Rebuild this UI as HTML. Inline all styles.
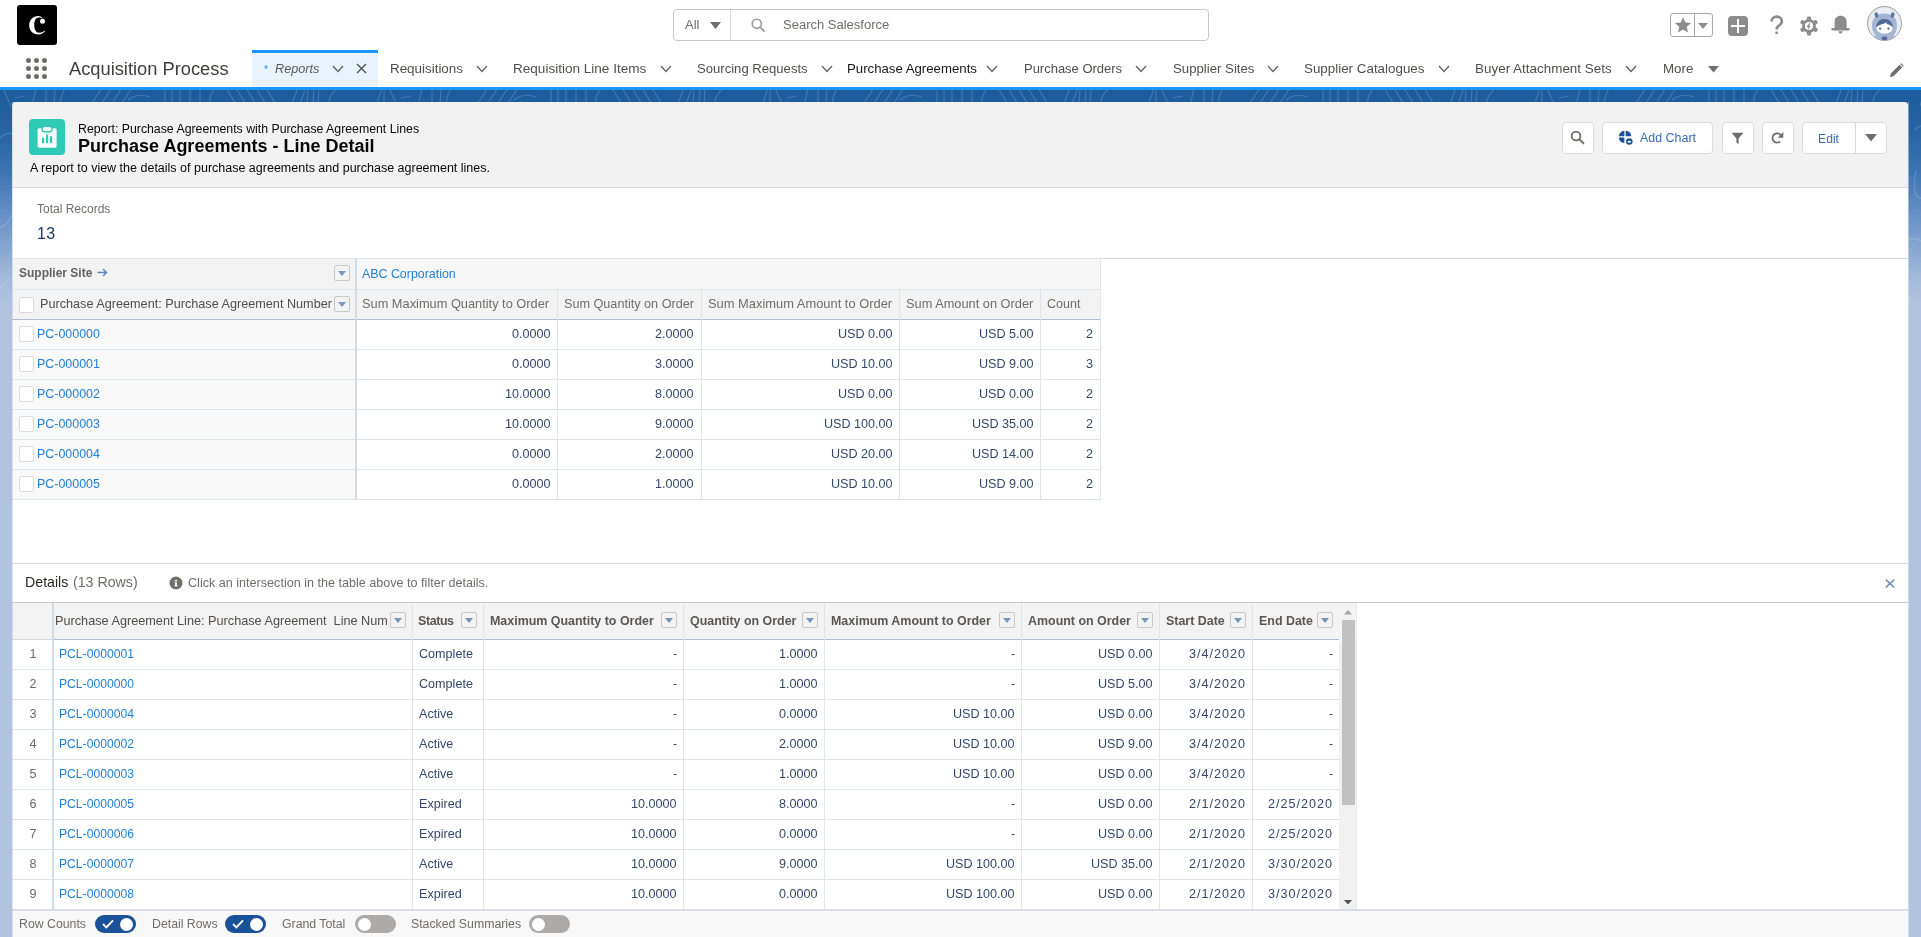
<!DOCTYPE html>
<html><head><meta charset="utf-8"><title>Report</title>
<style>
html,body{margin:0;padding:0;width:1921px;height:937px;overflow:hidden;background:#b0c4df;font-family:"Liberation Sans",sans-serif;}
.t{position:absolute;white-space:pre;will-change:transform;}
.r{position:absolute;}
</style></head><body>
<div class="r" style="left:0px;top:0px;width:1921px;height:87px;background:#fff"></div>
<div class="r" style="left:17px;top:5px;width:40px;height:40px;background:#000;border-radius:3px"></div>
<svg class="r" style="left:17px;top:5px" width="40" height="40" viewBox="0 0 40 40"><path d="M25.8 13.4 C24.6 11.6 23.0 10.9 21.3 10.9 C16.0 10.9 12.2 15.0 12.2 20.3 C12.2 25.7 16.0 29.6 21.3 29.6 C24.2 29.6 26.4 28.2 28.2 26.3 L27.7 25.8 C26.2 27.0 24.4 27.7 22.2 27.7 C19.0 27.7 17.2 24.5 17.2 20.0 C17.2 15.5 19.0 12.4 21.8 12.4 C23.4 12.4 24.8 12.9 25.8 13.8 Z" fill="#fff"/><circle cx="25.5" cy="16.3" r="2.5" fill="#fff"/></svg>
<div class="r" style="left:673px;top:9px;width:536px;height:32px;background:#fff;border:1px solid #c9c9c9;border-radius:4px;box-sizing:border-box"></div>
<div class="r" style="left:730px;top:10px;width:1px;height:30px;background:#dddbda"></div>
<div class="t" style="left:685px;top:18.00px;font-size:13px;line-height:13px;color:#706e6b;">All</div>
<svg class="r" style="left:710px;top:22px" width="11" height="7" viewBox="0 0 11 7"><path d="M0 0 H11 L5.5 7 Z" fill="#706e6b"/></svg>
<svg class="r" style="left:751px;top:18px" width="14" height="14" viewBox="0 0 14 14"><circle cx="5.8" cy="5.8" r="4.6" fill="none" stroke="#9a9a9a" stroke-width="1.6"/><path d="M9.2 9.2 L13 13" stroke="#9a9a9a" stroke-width="1.8" stroke-linecap="round"/></svg>
<div class="t" style="left:783px;top:18.00px;font-size:13px;line-height:13px;color:#706e6b;">Search Salesforce</div>
<div class="r" style="left:1670px;top:13px;width:43px;height:24px;border:1px solid #a8a8a8;border-radius:3px;box-sizing:border-box;background:#fff"></div>
<div class="r" style="left:1694px;top:14px;width:1px;height:22px;background:#a8a8a8"></div>
<svg class="r" style="left:1674px;top:16px" width="18" height="18" viewBox="0 0 24 24"><path d="M12 1.5 L15.1 8.6 L22.8 9.3 L17 14.4 L18.7 22 L12 18 L5.3 22 L7 14.4 L1.2 9.3 L8.9 8.6 Z" fill="#8c8c8c"/></svg>
<svg class="r" style="left:1698px;top:23px" width="10" height="6" viewBox="0 0 10 6"><path d="M0 0 H10 L5 6 Z" fill="#8c8c8c"/></svg>
<div class="r" style="left:1728px;top:16px;width:20px;height:20px;background:#8c8c8c;border-radius:4px"></div>
<div class="r" style="left:1737px;top:19px;width:2.4px;height:14px;background:#fff"></div>
<div class="r" style="left:1731px;top:24.8px;width:14px;height:2.4px;background:#fff"></div>
<svg class="r" style="left:1768px;top:15px" width="16" height="20" viewBox="0 0 16 20"><path d="M3.5 6.6 C3.5 3.3 5.9 1.6 8.7 1.6 C11.7 1.6 13.9 3.6 13.9 6.2 C13.9 8.6 12.2 9.8 10.7 10.9 C9.5 11.8 8.7 12.6 8.7 14.1 V14.4" fill="none" stroke="#8c8c8c" stroke-width="2.6"/><rect x="7.4" y="16.6" width="2.6" height="2.3" rx="0.4" fill="#8c8c8c"/></svg>
<svg class="r" style="left:1798.5px;top:15.8px" width="20" height="20" viewBox="0 0 20 20"><g fill="#8c8c8c"><circle cx="10" cy="10" r="6.9"/><rect x="8" y="0.6" width="4" height="4.2" rx="1" transform="rotate(0 10 10)"/><rect x="8" y="0.6" width="4" height="4.2" rx="1" transform="rotate(60 10 10)"/><rect x="8" y="0.6" width="4" height="4.2" rx="1" transform="rotate(120 10 10)"/><rect x="8" y="0.6" width="4" height="4.2" rx="1" transform="rotate(180 10 10)"/><rect x="8" y="0.6" width="4" height="4.2" rx="1" transform="rotate(240 10 10)"/><rect x="8" y="0.6" width="4" height="4.2" rx="1" transform="rotate(300 10 10)"/></g><circle cx="10" cy="10" r="4.1" fill="#fff"/><path d="M11 7.2 L8.6 10.4 H10.6 L9.2 12.9" stroke="#8c8c8c" stroke-width="1.1" fill="none"/></svg>
<svg class="r" style="left:1830px;top:15px" width="21" height="20" viewBox="0 0 21 20"><path d="M4.6 7 C4.6 3 7 0.8 10.6 0.8 C14.2 0.8 16.6 3 16.6 7 V13 H18.4 C19.2 13 19.6 13.6 19.6 14.2 C19.6 14.9 19.2 15.4 18.4 15.4 H2.6 C1.8 15.4 1.4 14.9 1.4 14.2 C1.4 13.6 1.8 13 2.6 13 H4.6 Z" fill="#8c8c8c"/><path d="M8.3 16.3 H12.9 C12.5 17.8 11.7 18.6 10.6 18.6 C9.5 18.6 8.7 17.8 8.3 16.3 Z" fill="#8c8c8c"/></svg>
<svg class="r" style="left:1866px;top:5.2px" width="37" height="37" viewBox="0 0 37 37"><defs><clipPath id="avc"><circle cx="18.5" cy="18.5" r="16.6"/></clipPath></defs><circle cx="18.5" cy="18.5" r="17" fill="#e8ecf3" stroke="#a0a0a0" stroke-width="1"/><g clip-path="url(#avc)"><path d="M6 20 C6 12.5 11 8.4 18.5 8.4 C26 8.4 31 12.5 31 20 C31 25 29.5 28.5 27.5 30.5 C30 32 32 34 33 37 H4 C5 34 7 32 9.5 30.5 C7.5 28.5 6 25 6 20 Z" fill="#a3b5d3"/><ellipse cx="18.5" cy="33.4" rx="2.9" ry="2" fill="#4f6a98"/></g><ellipse cx="10.4" cy="10" rx="1.8" ry="2.7" transform="rotate(-18 10.4 10)" fill="#5a74a0"/><ellipse cx="26.6" cy="10" rx="1.8" ry="2.7" transform="rotate(18 26.6 10)" fill="#5a74a0"/><ellipse cx="18.5" cy="23" rx="8.1" ry="5.8" fill="#fff"/><path d="M10.2 22.6 C10.2 17 13.8 14 18.5 14 C23.2 14 26.8 17 26.8 22.6 C25 20.2 22.6 19.3 20.2 19 L21.4 16.8 L17.8 18.8 C15 19.2 12.2 20.4 10.2 22.6 Z" fill="#4f6a98"/><circle cx="14.1" cy="23.6" r="1.2" fill="#5a74a0"/><circle cx="22.5" cy="23.6" r="1.2" fill="#5a74a0"/></svg>
<div class="r" style="left:25.6px;top:58.2px;width:5px;height:5px;background:#706e6b;border-radius:50%"></div>
<div class="r" style="left:25.6px;top:66.3px;width:5px;height:5px;background:#706e6b;border-radius:50%"></div>
<div class="r" style="left:25.6px;top:74.4px;width:5px;height:5px;background:#706e6b;border-radius:50%"></div>
<div class="r" style="left:33.7px;top:58.2px;width:5px;height:5px;background:#706e6b;border-radius:50%"></div>
<div class="r" style="left:33.7px;top:66.3px;width:5px;height:5px;background:#706e6b;border-radius:50%"></div>
<div class="r" style="left:33.7px;top:74.4px;width:5px;height:5px;background:#706e6b;border-radius:50%"></div>
<div class="r" style="left:41.8px;top:58.2px;width:5px;height:5px;background:#706e6b;border-radius:50%"></div>
<div class="r" style="left:41.8px;top:66.3px;width:5px;height:5px;background:#706e6b;border-radius:50%"></div>
<div class="r" style="left:41.8px;top:74.4px;width:5px;height:5px;background:#706e6b;border-radius:50%"></div>
<div class="t" style="left:68.5px;top:59.51px;font-size:18.3px;line-height:18.3px;color:#3e3e3c;">Acquisition Process</div>
<div class="r" style="left:252px;top:50px;width:126px;height:37px;background:#e8f3fd"></div>
<div class="r" style="left:252px;top:50px;width:126px;height:3px;background:#1b96ff"></div>
<div class="t" style="left:264px;top:64.53px;font-size:10px;line-height:10px;color:#1b96ff;">*</div>
<div class="t" style="left:275px;top:63.25px;font-size:12.7px;line-height:12.7px;color:#5c5a58;font-style:italic;">Reports</div>
<svg class="r" style="left:332px;top:65px" width="12" height="8" viewBox="0 0 12 8"><path d="M1 1 L6 6.5 L11 1" fill="none" stroke="#615f5d" stroke-width="1.25"/></svg>
<svg class="r" style="left:356px;top:63px" width="11" height="11" viewBox="0 0 11 11"><path d="M1 1 L10 10 M10 1 L1 10" stroke="#514f4d" stroke-width="1.4"/></svg>
<div class="t" style="left:390px;top:61.66px;font-size:13.4px;line-height:13.4px;color:#514f4d;">Requisitions</div>
<svg class="r" style="left:476px;top:65px" width="12" height="8" viewBox="0 0 12 8"><path d="M1 1 L6 6.5 L11 1" fill="none" stroke="#615f5d" stroke-width="1.25"/></svg>
<div class="t" style="left:513px;top:61.52px;font-size:13.56px;line-height:13.56px;color:#514f4d;">Requisition Line Items</div>
<svg class="r" style="left:660px;top:65px" width="12" height="8" viewBox="0 0 12 8"><path d="M1 1 L6 6.5 L11 1" fill="none" stroke="#615f5d" stroke-width="1.25"/></svg>
<div class="t" style="left:697px;top:61.91px;font-size:13.1px;line-height:13.1px;color:#514f4d;">Sourcing Requests</div>
<svg class="r" style="left:821px;top:65px" width="12" height="8" viewBox="0 0 12 8"><path d="M1 1 L6 6.5 L11 1" fill="none" stroke="#615f5d" stroke-width="1.25"/></svg>
<div class="t" style="left:847px;top:61.82px;font-size:13.21px;line-height:13.21px;color:#181818;">Purchase Agreements</div>
<svg class="r" style="left:986px;top:65px" width="12" height="8" viewBox="0 0 12 8"><path d="M1 1 L6 6.5 L11 1" fill="none" stroke="#615f5d" stroke-width="1.25"/></svg>
<div class="t" style="left:1024px;top:63.02px;font-size:12.97px;line-height:12.97px;color:#514f4d;">Purchase Orders</div>
<svg class="r" style="left:1135px;top:65px" width="12" height="8" viewBox="0 0 12 8"><path d="M1 1 L6 6.5 L11 1" fill="none" stroke="#615f5d" stroke-width="1.25"/></svg>
<div class="t" style="left:1173px;top:61.82px;font-size:13.21px;line-height:13.21px;color:#514f4d;">Supplier Sites</div>
<svg class="r" style="left:1267px;top:65px" width="12" height="8" viewBox="0 0 12 8"><path d="M1 1 L6 6.5 L11 1" fill="none" stroke="#615f5d" stroke-width="1.25"/></svg>
<div class="t" style="left:1304px;top:61.67px;font-size:13.38px;line-height:13.38px;color:#514f4d;">Supplier Catalogues</div>
<svg class="r" style="left:1438px;top:65px" width="12" height="8" viewBox="0 0 12 8"><path d="M1 1 L6 6.5 L11 1" fill="none" stroke="#615f5d" stroke-width="1.25"/></svg>
<div class="t" style="left:1475px;top:61.61px;font-size:13.45px;line-height:13.45px;color:#514f4d;">Buyer Attachment Sets</div>
<svg class="r" style="left:1625px;top:65px" width="12" height="8" viewBox="0 0 12 8"><path d="M1 1 L6 6.5 L11 1" fill="none" stroke="#615f5d" stroke-width="1.25"/></svg>
<div class="t" style="left:1663px;top:61.74px;font-size:13.3px;line-height:13.3px;color:#514f4d;">More</div>
<svg class="r" style="left:1708px;top:66px" width="11" height="6.5" viewBox="0 0 11 6.5"><path d="M0 0 H11 L5.5 6.5 Z" fill="#6f6d6b"/></svg>
<svg class="r" style="left:1889px;top:62.5px" width="15" height="15" viewBox="0 0 15 15"><path d="M1 14 L1.8 10.6 L10.6 1.8 L13.2 4.4 L4.4 13.2 Z" fill="#706e6b"/><path d="M11.3 1.1 L12.2 0.2 L14.8 2.8 L13.9 3.7 Z" fill="#706e6b"/></svg>
<div class="r" style="left:0px;top:87px;width:1921px;height:3px;background:#1b96ff"></div>
<div class="r" style="left:0px;top:90px;width:1921px;height:847px;background:linear-gradient(to bottom,#1d5c9c 0px,#2563a3 40px,#3c72b2 80px,#6c94c7 130px,#a0b8da 185px,#b0c4df 212px)"></div>
<svg class="r" style="left:0;top:90px" width="1921" height="230"><defs><pattern id="pt" x="0" y="0" width="386" height="230" patternUnits="userSpaceOnUse"><path d="M226 -2 L237 16 M236 -2 L247 16 M246 -2 L257 16 M256 -2 L267 16 M266 -2 L277 16 M298 -2 L291 16 M306 -2 L299 16 M308 -2 L307 16 M314 -2 L313 16 M319 -2 L318 16 M338 -2 C330 4 328 10 329 16 M382 -2 L376 16 M384 -2 L384 16 M3 -2 L11 16 M15 8 L25 6 M36 -2 L32 16 M46 -2 L46 16 M55 -2 L54 16 M66 -2 C61 4 60 10 61 16 M102 -2 L90 16 M112 -2 L100 16 M122 -2 L110 16 M132 -2 L120 16 M128 10 C134 5 142 4 150 7 M165 -2 L165 16 M172 -2 L172 16 M180 -2 L180 16 M190 -2 L190 16 M200 -2 L200 16 M216 -2 C210 4 209 10 210 16 M-10 60 C10 30 25 40 20 90 C15 140 -5 150 -10 120 M0 200 C20 170 30 190 10 230 M370 40 C395 20 400 60 390 90 C380 120 365 110 372 80 M360 150 C390 140 400 190 380 210" fill="none" stroke="#ffffff" stroke-opacity="0.16" stroke-width="1.1"/></pattern></defs><rect width="1921" height="230" fill="url(#pt)"/></svg>
<div class="r" style="left:12px;top:102px;width:1896px;height:835px;background:#fff;border-radius:4px 4px 0 0"></div>
<div class="r" style="left:12px;top:102px;width:1896px;height:85px;background:#f2f2f2;border-radius:4px 4px 0 0"></div>
<div class="r" style="left:12px;top:187px;width:1896px;height:1px;background:#dddbda"></div>
<div class="r" style="left:29px;top:119px;width:36px;height:36px;background:#2fcab7;border-radius:4px"></div>
<svg class="r" style="left:29px;top:119px" width="36" height="36" viewBox="0 0 36 36"><rect x="8.6" y="9.2" width="19" height="19.5" rx="1.6" fill="#fff"/><rect x="13" y="7.2" width="10" height="5.6" rx="2.6" fill="#fff" stroke="#2fcab7" stroke-width="1.4"/><rect x="13" y="18.6" width="2.2" height="5.6" fill="#2fcab7"/><rect x="17" y="15.6" width="2.2" height="8.6" fill="#2fcab7"/><rect x="21" y="17.2" width="2.2" height="7" fill="#2fcab7"/></svg>
<div class="t" style="left:78px;top:122.59px;font-size:12.3px;line-height:12.3px;color:#080707;">Report: Purchase Agreements with Purchase Agreement Lines</div>
<div class="t" style="left:78px;top:136.76px;font-size:18px;line-height:18px;color:#080707;font-weight:700;">Purchase Agreements - Line Detail</div>
<div class="t" style="left:30px;top:162.42px;font-size:12.5px;line-height:12.5px;color:#080707;">A report to view the details of purchase agreements and purchase agreement lines.</div>
<div class="r" style="left:1562px;top:122px;width:32px;height:32px;background:#fff;border:1px solid #dddbda;border-radius:4px;box-sizing:border-box"></div>
<div class="r" style="left:1602px;top:122px;width:111px;height:32px;background:#fff;border:1px solid #dddbda;border-radius:4px;box-sizing:border-box"></div>
<div class="r" style="left:1722px;top:122px;width:32px;height:32px;background:#fff;border:1px solid #dddbda;border-radius:4px;box-sizing:border-box"></div>
<div class="r" style="left:1762px;top:122px;width:32px;height:32px;background:#fff;border:1px solid #dddbda;border-radius:4px;box-sizing:border-box"></div>
<div class="r" style="left:1802px;top:122px;width:85px;height:32px;background:#fff;border:1px solid #dddbda;border-radius:4px;box-sizing:border-box"></div>
<div class="r" style="left:1855px;top:123px;width:1px;height:30px;background:#dddbda"></div>
<svg class="r" style="left:1570px;top:130px" width="15" height="15" viewBox="0 0 15 15"><circle cx="6" cy="6" r="4.4" fill="none" stroke="#706e6b" stroke-width="1.8"/><path d="M9.3 9.3 L13.4 13.4" stroke="#706e6b" stroke-width="2" stroke-linecap="round"/></svg>
<svg class="r" style="left:1618px;top:130px" width="16" height="16" viewBox="0 0 16 16"><g fill="#1b4f9a"><path d="M6.4 6.2 V0.65 A6.3 6.3 0 0 0 0.85 6.2 Z"/><path d="M7.6 0.65 A6.3 6.3 0 0 1 13.35 6.2 L7.6 6.2 Z"/><path d="M6.4 7.5 H0.85 A6.3 6.3 0 0 0 6.4 13.1 Z"/></g><circle cx="11.3" cy="11.6" r="3.9" fill="#1b4f9a" stroke="#fff" stroke-width="1.3"/><ellipse cx="11.3" cy="11.7" rx="1.9" ry="1" fill="#fff"/></svg>
<div class="t" style="left:1640px;top:132.46px;font-size:12.45px;line-height:12.45px;color:#3a6bb5;">Add Chart</div>
<svg class="r" style="left:1731px;top:132px" width="13" height="13" viewBox="0 0 13 13"><path d="M0.5 0.8 H12.5 L7.6 6.6 V12.3 L5.4 10.6 V6.6 Z" fill="#706e6b"/></svg>
<svg class="r" style="left:1770px;top:130px" width="15" height="15" viewBox="0 0 15 15"><path d="M10.9 5.4 A4.6 4.6 0 1 0 10.1 11.5" fill="none" stroke="#706e6b" stroke-width="1.8"/><path d="M13.3 1.9 V7.8 H7.7 Z" fill="#706e6b"/></svg>
<div class="t" style="left:1818px;top:132.67px;font-size:12.2px;line-height:12.2px;color:#3a6bb5;">Edit</div>
<svg class="r" style="left:1865px;top:134px" width="12" height="8" viewBox="0 0 12 8"><path d="M0 0 H12 L6 7.5 Z" fill="#706e6b"/></svg>
<div class="t" style="left:37px;top:202.84px;font-size:12px;line-height:12px;color:#706e6b;">Total Records</div>
<div class="t" style="left:37.3px;top:225.96px;font-size:16px;line-height:16px;color:#1f3a66;letter-spacing:0.3px;">13</div>
<div class="r" style="left:12px;top:258px;width:1088px;height:1px;background:#dde3ec"></div>
<div class="r" style="left:1100px;top:258px;width:808px;height:1px;background:#d8d8d8"></div>
<div class="r" style="left:12px;top:259px;width:343px;height:30px;background:#f3f3f3"></div>
<div class="r" style="left:357px;top:259px;width:743px;height:30px;background:#f7f7f7"></div>
<div class="r" style="left:12px;top:290px;width:1088px;height:29px;background:#f3f3f3"></div>
<div class="r" style="left:12px;top:289px;width:1088px;height:1px;background:#dfe4ec"></div>
<div class="r" style="left:12px;top:319px;width:1088px;height:1px;background:#aebdd1"></div>
<div class="r" style="left:12px;top:320px;width:343px;height:179px;background:#f9f9f9"></div>
<div class="r" style="left:12px;top:349px;width:1088px;height:1px;background:#dfe4ec"></div>
<div class="r" style="left:12px;top:379px;width:1088px;height:1px;background:#dfe4ec"></div>
<div class="r" style="left:12px;top:409px;width:1088px;height:1px;background:#dfe4ec"></div>
<div class="r" style="left:12px;top:439px;width:1088px;height:1px;background:#dfe4ec"></div>
<div class="r" style="left:12px;top:469px;width:1088px;height:1px;background:#dfe4ec"></div>
<div class="r" style="left:12px;top:499px;width:1088px;height:1px;background:#dfe4ec"></div>
<div class="r" style="left:355px;top:259px;width:2px;height:241px;background:#d3dbe6"></div>
<div class="r" style="left:557px;top:289px;width:1px;height:211px;background:#dfe4ec"></div>
<div class="r" style="left:701px;top:289px;width:1px;height:211px;background:#dfe4ec"></div>
<div class="r" style="left:899px;top:289px;width:1px;height:211px;background:#dfe4ec"></div>
<div class="r" style="left:1040px;top:289px;width:1px;height:211px;background:#dfe4ec"></div>
<div class="r" style="left:1100px;top:258px;width:1px;height:242px;background:#dfe4ec"></div>
<div class="r" style="left:333.5px;top:265px;width:16px;height:16px;border:1px solid #c9c9c9;border-radius:2px;box-sizing:border-box;background:#f3f3f3"></div>
<svg class="r" style="left:337.5px;top:271px" width="8" height="5" viewBox="0 0 8 5"><path d="M0 0 H8 L4 5 Z" fill="#7896bc"/></svg>
<div class="r" style="left:333.5px;top:296px;width:16px;height:16px;border:1px solid #c9c9c9;border-radius:2px;box-sizing:border-box;background:#f3f3f3"></div>
<svg class="r" style="left:337.5px;top:302px" width="8" height="5" viewBox="0 0 8 5"><path d="M0 0 H8 L4 5 Z" fill="#7896bc"/></svg>
<div class="t" style="left:18.5px;top:266.84px;font-size:12px;line-height:12px;color:#626262;font-weight:700;">Supplier Site</div>
<svg class="r" style="left:97px;top:268px" width="11" height="9" viewBox="0 0 11 9"><path d="M0.5 4.5 H9.5 M6 1 L9.6 4.5 L6 8" fill="none" stroke="#5b84bd" stroke-width="1.3"/></svg>
<div class="t" style="left:362px;top:267.50px;font-size:12.4px;line-height:12.4px;color:#2480d6;">ABC Corporation</div>
<div class="r" style="left:18.5px;top:297px;width:15.5px;height:15.5px;border:1px solid #dddbda;border-radius:2px;box-sizing:border-box;background:#fff"></div>
<div class="t" style="left:40.4px;top:298.28px;font-size:12.66px;line-height:12.66px;color:#514f4d;">Purchase Agreement: Purchase Agreement Number</div>
<div class="t" style="left:362px;top:298.16px;font-size:12.8px;line-height:12.8px;color:#706e6b;">Sum Maximum Quantity to Order</div>
<div class="t" style="left:563.5px;top:298.29px;font-size:12.65px;line-height:12.65px;color:#706e6b;">Sum Quantity on Order</div>
<div class="t" style="left:707.5px;top:298.08px;font-size:12.9px;line-height:12.9px;color:#706e6b;">Sum Maximum Amount to Order</div>
<div class="t" style="left:905.5px;top:298.16px;font-size:12.8px;line-height:12.8px;color:#706e6b;">Sum Amount on Order</div>
<div class="t" style="left:1046.5px;top:298.37px;font-size:12.56px;line-height:12.56px;color:#706e6b;">Count</div>
<div class="r" style="left:18.5px;top:326px;width:15.5px;height:15.5px;border:1px solid #dddbda;border-radius:2px;box-sizing:border-box;background:#fff"></div>
<div class="t" style="left:37.3px;top:328.46px;font-size:12.45px;line-height:12.45px;color:#2480d6;">PC-000000</div>
<div class="t" style="right:1370.5px;top:328.33px;font-size:12.6px;line-height:12.6px;color:#34486b;">0.0000</div>
<div class="t" style="right:1227px;top:328.33px;font-size:12.6px;line-height:12.6px;color:#34486b;">2.0000</div>
<div class="t" style="right:1028.5px;top:328.33px;font-size:12.6px;line-height:12.6px;color:#34486b;">USD 0.00</div>
<div class="t" style="right:887.5px;top:328.33px;font-size:12.6px;line-height:12.6px;color:#34486b;">USD 5.00</div>
<div class="t" style="right:827.5px;top:328.33px;font-size:12.6px;line-height:12.6px;color:#34486b;">2</div>
<div class="r" style="left:18.5px;top:356px;width:15.5px;height:15.5px;border:1px solid #dddbda;border-radius:2px;box-sizing:border-box;background:#fff"></div>
<div class="t" style="left:37.3px;top:358.46px;font-size:12.45px;line-height:12.45px;color:#2480d6;">PC-000001</div>
<div class="t" style="right:1370.5px;top:358.33px;font-size:12.6px;line-height:12.6px;color:#34486b;">0.0000</div>
<div class="t" style="right:1227px;top:358.33px;font-size:12.6px;line-height:12.6px;color:#34486b;">3.0000</div>
<div class="t" style="right:1028.5px;top:358.33px;font-size:12.6px;line-height:12.6px;color:#34486b;">USD 10.00</div>
<div class="t" style="right:887.5px;top:358.33px;font-size:12.6px;line-height:12.6px;color:#34486b;">USD 9.00</div>
<div class="t" style="right:827.5px;top:358.33px;font-size:12.6px;line-height:12.6px;color:#34486b;">3</div>
<div class="r" style="left:18.5px;top:386px;width:15.5px;height:15.5px;border:1px solid #dddbda;border-radius:2px;box-sizing:border-box;background:#fff"></div>
<div class="t" style="left:37.3px;top:388.46px;font-size:12.45px;line-height:12.45px;color:#2480d6;">PC-000002</div>
<div class="t" style="right:1370.5px;top:388.33px;font-size:12.6px;line-height:12.6px;color:#34486b;">10.0000</div>
<div class="t" style="right:1227px;top:388.33px;font-size:12.6px;line-height:12.6px;color:#34486b;">8.0000</div>
<div class="t" style="right:1028.5px;top:388.33px;font-size:12.6px;line-height:12.6px;color:#34486b;">USD 0.00</div>
<div class="t" style="right:887.5px;top:388.33px;font-size:12.6px;line-height:12.6px;color:#34486b;">USD 0.00</div>
<div class="t" style="right:827.5px;top:388.33px;font-size:12.6px;line-height:12.6px;color:#34486b;">2</div>
<div class="r" style="left:18.5px;top:416px;width:15.5px;height:15.5px;border:1px solid #dddbda;border-radius:2px;box-sizing:border-box;background:#fff"></div>
<div class="t" style="left:37.3px;top:418.46px;font-size:12.45px;line-height:12.45px;color:#2480d6;">PC-000003</div>
<div class="t" style="right:1370.5px;top:418.33px;font-size:12.6px;line-height:12.6px;color:#34486b;">10.0000</div>
<div class="t" style="right:1227px;top:418.33px;font-size:12.6px;line-height:12.6px;color:#34486b;">9.0000</div>
<div class="t" style="right:1028.5px;top:418.33px;font-size:12.6px;line-height:12.6px;color:#34486b;">USD 100.00</div>
<div class="t" style="right:887.5px;top:418.33px;font-size:12.6px;line-height:12.6px;color:#34486b;">USD 35.00</div>
<div class="t" style="right:827.5px;top:418.33px;font-size:12.6px;line-height:12.6px;color:#34486b;">2</div>
<div class="r" style="left:18.5px;top:446px;width:15.5px;height:15.5px;border:1px solid #dddbda;border-radius:2px;box-sizing:border-box;background:#fff"></div>
<div class="t" style="left:37.3px;top:448.46px;font-size:12.45px;line-height:12.45px;color:#2480d6;">PC-000004</div>
<div class="t" style="right:1370.5px;top:448.33px;font-size:12.6px;line-height:12.6px;color:#34486b;">0.0000</div>
<div class="t" style="right:1227px;top:448.33px;font-size:12.6px;line-height:12.6px;color:#34486b;">2.0000</div>
<div class="t" style="right:1028.5px;top:448.33px;font-size:12.6px;line-height:12.6px;color:#34486b;">USD 20.00</div>
<div class="t" style="right:887.5px;top:448.33px;font-size:12.6px;line-height:12.6px;color:#34486b;">USD 14.00</div>
<div class="t" style="right:827.5px;top:448.33px;font-size:12.6px;line-height:12.6px;color:#34486b;">2</div>
<div class="r" style="left:18.5px;top:476px;width:15.5px;height:15.5px;border:1px solid #dddbda;border-radius:2px;box-sizing:border-box;background:#fff"></div>
<div class="t" style="left:37.3px;top:478.46px;font-size:12.45px;line-height:12.45px;color:#2480d6;">PC-000005</div>
<div class="t" style="right:1370.5px;top:478.33px;font-size:12.6px;line-height:12.6px;color:#34486b;">0.0000</div>
<div class="t" style="right:1227px;top:478.33px;font-size:12.6px;line-height:12.6px;color:#34486b;">1.0000</div>
<div class="t" style="right:1028.5px;top:478.33px;font-size:12.6px;line-height:12.6px;color:#34486b;">USD 10.00</div>
<div class="t" style="right:887.5px;top:478.33px;font-size:12.6px;line-height:12.6px;color:#34486b;">USD 9.00</div>
<div class="t" style="right:827.5px;top:478.33px;font-size:12.6px;line-height:12.6px;color:#34486b;">2</div>
<div class="r" style="left:12px;top:563px;width:1896px;height:1px;background:#dddbda"></div>
<div class="t" style="left:24.7px;top:574.98px;font-size:14.2px;line-height:14.2px;color:#2b2826;">Details</div>
<div class="t" style="left:73px;top:574.98px;font-size:14.2px;line-height:14.2px;color:#706e6b;">(13 Rows)</div>
<svg class="r" style="left:169.4px;top:576px" width="14" height="14" viewBox="0 0 14 14"><circle cx="7" cy="7" r="6.5" fill="#706e6b"/><ellipse cx="7" cy="4.6" rx="1.3" ry="0.85" fill="#fff"/><rect x="6.1" y="6.3" width="1.8" height="3.8" fill="#fff"/><rect x="5.4" y="9.3" width="3.3" height="1" fill="#fff"/><rect x="5.5" y="6.3" width="1" height="0.8" fill="#fff"/></svg>
<div class="t" style="left:188px;top:577.33px;font-size:12.6px;line-height:12.6px;color:#706e6b;">Click an intersection in the table above to filter details.</div>
<svg class="r" style="left:1884.5px;top:578.5px" width="10" height="9" viewBox="0 0 10 9"><path d="M0.8 0.6 L9.2 8.4 M9.2 0.6 L0.8 8.4" stroke="#7090b8" stroke-width="1.5"/></svg>
<div class="r" style="left:12px;top:602px;width:1896px;height:1px;background:#c9c9c9"></div>
<div class="r" style="left:12px;top:603px;width:1345px;height:36px;background:#f3f3f3"></div>
<div class="r" style="left:12px;top:638.5px;width:41px;height:1.5px;background:#d9d9d9"></div>
<div class="r" style="left:53px;top:639px;width:1286px;height:1px;background:#aebdd1"></div>
<div class="r" style="left:12px;top:669px;width:1327px;height:1px;background:#dfe4ec"></div>
<div class="r" style="left:12px;top:699px;width:1327px;height:1px;background:#dfe4ec"></div>
<div class="r" style="left:12px;top:729px;width:1327px;height:1px;background:#dfe4ec"></div>
<div class="r" style="left:12px;top:759px;width:1327px;height:1px;background:#dfe4ec"></div>
<div class="r" style="left:12px;top:789px;width:1327px;height:1px;background:#dfe4ec"></div>
<div class="r" style="left:12px;top:819px;width:1327px;height:1px;background:#dfe4ec"></div>
<div class="r" style="left:12px;top:849px;width:1327px;height:1px;background:#dfe4ec"></div>
<div class="r" style="left:12px;top:879px;width:1327px;height:1px;background:#dfe4ec"></div>
<div class="r" style="left:12px;top:909px;width:1896px;height:2px;background:#d8dde6"></div>
<div class="r" style="left:52px;top:603px;width:2px;height:306px;background:#d3dbe6"></div>
<div class="r" style="left:411.5px;top:603px;width:1.5px;height:306px;background:#dfe5ee"></div>
<div class="r" style="left:482.5px;top:603px;width:1.5px;height:306px;background:#dfe5ee"></div>
<div class="r" style="left:682.5px;top:603px;width:1.5px;height:306px;background:#dfe5ee"></div>
<div class="r" style="left:823.5px;top:603px;width:1.5px;height:306px;background:#dfe5ee"></div>
<div class="r" style="left:1020.5px;top:603px;width:1.5px;height:306px;background:#dfe5ee"></div>
<div class="r" style="left:1158.5px;top:603px;width:1.5px;height:306px;background:#dfe5ee"></div>
<div class="r" style="left:1251.5px;top:603px;width:1.5px;height:306px;background:#dfe5ee"></div>
<div class="r" style="left:1339px;top:641px;width:18px;height:268px;background:#f1f1f1"></div>
<div class="r" style="left:1356px;top:603px;width:1px;height:306px;background:#e6eaf0"></div>
<svg class="r" style="left:1344px;top:610px" width="8" height="4.5" viewBox="0 0 8 4.5"><path d="M0 4.5 H8 L4 0 Z" fill="#a3a3a3"/></svg>
<div class="r" style="left:1341.5px;top:620px;width:13px;height:185px;background:#c1c1c1"></div>
<svg class="r" style="left:1344px;top:899.5px" width="8" height="4.5" viewBox="0 0 8 4.5"><path d="M0 0 H8 L4 4.5 Z" fill="#505050"/></svg>
<div class="t" style="left:54.7px;top:614.75px;font-size:12.7px;line-height:12.7px;color:#514f4d;">Purchase Agreement Line: Purchase Agreement&nbsp; Line Num</div>
<div class="r" style="left:389.8px;top:612.4px;width:16px;height:16px;border:1px solid #c9c9c9;border-radius:2px;box-sizing:border-box;background:#f3f3f3"></div>
<svg class="r" style="left:393.8px;top:618.4px" width="8" height="5" viewBox="0 0 8 5"><path d="M0 0 H8 L4 5 Z" fill="#7896bc"/></svg>
<div class="t" style="left:417.8px;top:614.96px;font-size:12.45px;line-height:12.45px;color:#5a5856;font-weight:700;letter-spacing:-0.4px;">Status</div>
<div class="r" style="left:460.8px;top:612.4px;width:16px;height:16px;border:1px solid #c9c9c9;border-radius:2px;box-sizing:border-box;background:#f3f3f3"></div>
<svg class="r" style="left:464.8px;top:618.4px" width="8" height="5" viewBox="0 0 8 5"><path d="M0 0 H8 L4 5 Z" fill="#7896bc"/></svg>
<div class="t" style="left:489.8px;top:614.96px;font-size:12.45px;line-height:12.45px;color:#5a5856;font-weight:700;">Maximum Quantity to Order</div>
<div class="r" style="left:660.8px;top:612.4px;width:16px;height:16px;border:1px solid #c9c9c9;border-radius:2px;box-sizing:border-box;background:#f3f3f3"></div>
<svg class="r" style="left:664.8px;top:618.4px" width="8" height="5" viewBox="0 0 8 5"><path d="M0 0 H8 L4 5 Z" fill="#7896bc"/></svg>
<div class="t" style="left:689.5px;top:614.96px;font-size:12.45px;line-height:12.45px;color:#5a5856;font-weight:700;">Quantity on Order</div>
<div class="r" style="left:801.8px;top:612.4px;width:16px;height:16px;border:1px solid #c9c9c9;border-radius:2px;box-sizing:border-box;background:#f3f3f3"></div>
<svg class="r" style="left:805.8px;top:618.4px" width="8" height="5" viewBox="0 0 8 5"><path d="M0 0 H8 L4 5 Z" fill="#7896bc"/></svg>
<div class="t" style="left:830.5px;top:614.96px;font-size:12.45px;line-height:12.45px;color:#5a5856;font-weight:700;">Maximum Amount to Order</div>
<div class="r" style="left:998.8px;top:612.4px;width:16px;height:16px;border:1px solid #c9c9c9;border-radius:2px;box-sizing:border-box;background:#f3f3f3"></div>
<svg class="r" style="left:1002.8px;top:618.4px" width="8" height="5" viewBox="0 0 8 5"><path d="M0 0 H8 L4 5 Z" fill="#7896bc"/></svg>
<div class="t" style="left:1027.5px;top:614.96px;font-size:12.45px;line-height:12.45px;color:#5a5856;font-weight:700;">Amount on Order</div>
<div class="r" style="left:1136.8px;top:612.4px;width:16px;height:16px;border:1px solid #c9c9c9;border-radius:2px;box-sizing:border-box;background:#f3f3f3"></div>
<svg class="r" style="left:1140.8px;top:618.4px" width="8" height="5" viewBox="0 0 8 5"><path d="M0 0 H8 L4 5 Z" fill="#7896bc"/></svg>
<div class="t" style="left:1165.5px;top:614.96px;font-size:12.45px;line-height:12.45px;color:#5a5856;font-weight:700;">Start Date</div>
<div class="r" style="left:1229.8px;top:612.4px;width:16px;height:16px;border:1px solid #c9c9c9;border-radius:2px;box-sizing:border-box;background:#f3f3f3"></div>
<svg class="r" style="left:1233.8px;top:618.4px" width="8" height="5" viewBox="0 0 8 5"><path d="M0 0 H8 L4 5 Z" fill="#7896bc"/></svg>
<div class="t" style="left:1258.5px;top:614.96px;font-size:12.45px;line-height:12.45px;color:#5a5856;font-weight:700;">End Date</div>
<div class="r" style="left:1316.8px;top:612.4px;width:16px;height:16px;border:1px solid #c9c9c9;border-radius:2px;box-sizing:border-box;background:#f3f3f3"></div>
<svg class="r" style="left:1320.8px;top:618.4px" width="8" height="5" viewBox="0 0 8 5"><path d="M0 0 H8 L4 5 Z" fill="#7896bc"/></svg>
<div class="t" style="left:32.5px;transform:translateX(-50%);top:648.33px;font-size:12.6px;line-height:12.6px;color:#6b6967;">1</div>
<div class="t" style="left:59.2px;top:647.72px;font-size:12.15px;line-height:12.15px;color:#2480d6;">PCL-0000001</div>
<div class="t" style="left:418.6px;top:648.33px;font-size:12.6px;line-height:12.6px;color:#34486b;">Complete</div>
<div class="t" style="right:1244.2px;top:648.33px;font-size:12.6px;line-height:12.6px;color:#34486b;">-</div>
<div class="t" style="right:1103.2px;top:648.33px;font-size:12.6px;line-height:12.6px;color:#34486b;">1.0000</div>
<div class="t" style="right:906.2px;top:648.33px;font-size:12.6px;line-height:12.6px;color:#34486b;">-</div>
<div class="t" style="right:768.2px;top:648.33px;font-size:12.6px;line-height:12.6px;color:#34486b;">USD 0.00</div>
<div class="t" style="right:674.8px;top:648.33px;font-size:12.6px;line-height:12.6px;color:#34486b;letter-spacing:1px;">3/4/2020</div>
<div class="t" style="right:588.2px;top:648.33px;font-size:12.6px;line-height:12.6px;color:#34486b;">-</div>
<div class="t" style="left:32.5px;transform:translateX(-50%);top:678.33px;font-size:12.6px;line-height:12.6px;color:#6b6967;">2</div>
<div class="t" style="left:59.2px;top:677.72px;font-size:12.15px;line-height:12.15px;color:#2480d6;">PCL-0000000</div>
<div class="t" style="left:418.6px;top:678.33px;font-size:12.6px;line-height:12.6px;color:#34486b;">Complete</div>
<div class="t" style="right:1244.2px;top:678.33px;font-size:12.6px;line-height:12.6px;color:#34486b;">-</div>
<div class="t" style="right:1103.2px;top:678.33px;font-size:12.6px;line-height:12.6px;color:#34486b;">1.0000</div>
<div class="t" style="right:906.2px;top:678.33px;font-size:12.6px;line-height:12.6px;color:#34486b;">-</div>
<div class="t" style="right:768.2px;top:678.33px;font-size:12.6px;line-height:12.6px;color:#34486b;">USD 5.00</div>
<div class="t" style="right:674.8px;top:678.33px;font-size:12.6px;line-height:12.6px;color:#34486b;letter-spacing:1px;">3/4/2020</div>
<div class="t" style="right:588.2px;top:678.33px;font-size:12.6px;line-height:12.6px;color:#34486b;">-</div>
<div class="t" style="left:32.5px;transform:translateX(-50%);top:708.33px;font-size:12.6px;line-height:12.6px;color:#6b6967;">3</div>
<div class="t" style="left:59.2px;top:707.72px;font-size:12.15px;line-height:12.15px;color:#2480d6;">PCL-0000004</div>
<div class="t" style="left:418.6px;top:708.33px;font-size:12.6px;line-height:12.6px;color:#34486b;">Active</div>
<div class="t" style="right:1244.2px;top:708.33px;font-size:12.6px;line-height:12.6px;color:#34486b;">-</div>
<div class="t" style="right:1103.2px;top:708.33px;font-size:12.6px;line-height:12.6px;color:#34486b;">0.0000</div>
<div class="t" style="right:906.2px;top:708.33px;font-size:12.6px;line-height:12.6px;color:#34486b;">USD 10.00</div>
<div class="t" style="right:768.2px;top:708.33px;font-size:12.6px;line-height:12.6px;color:#34486b;">USD 0.00</div>
<div class="t" style="right:674.8px;top:708.33px;font-size:12.6px;line-height:12.6px;color:#34486b;letter-spacing:1px;">3/4/2020</div>
<div class="t" style="right:588.2px;top:708.33px;font-size:12.6px;line-height:12.6px;color:#34486b;">-</div>
<div class="t" style="left:32.5px;transform:translateX(-50%);top:738.33px;font-size:12.6px;line-height:12.6px;color:#6b6967;">4</div>
<div class="t" style="left:59.2px;top:737.72px;font-size:12.15px;line-height:12.15px;color:#2480d6;">PCL-0000002</div>
<div class="t" style="left:418.6px;top:738.33px;font-size:12.6px;line-height:12.6px;color:#34486b;">Active</div>
<div class="t" style="right:1244.2px;top:738.33px;font-size:12.6px;line-height:12.6px;color:#34486b;">-</div>
<div class="t" style="right:1103.2px;top:738.33px;font-size:12.6px;line-height:12.6px;color:#34486b;">2.0000</div>
<div class="t" style="right:906.2px;top:738.33px;font-size:12.6px;line-height:12.6px;color:#34486b;">USD 10.00</div>
<div class="t" style="right:768.2px;top:738.33px;font-size:12.6px;line-height:12.6px;color:#34486b;">USD 9.00</div>
<div class="t" style="right:674.8px;top:738.33px;font-size:12.6px;line-height:12.6px;color:#34486b;letter-spacing:1px;">3/4/2020</div>
<div class="t" style="right:588.2px;top:738.33px;font-size:12.6px;line-height:12.6px;color:#34486b;">-</div>
<div class="t" style="left:32.5px;transform:translateX(-50%);top:768.33px;font-size:12.6px;line-height:12.6px;color:#6b6967;">5</div>
<div class="t" style="left:59.2px;top:767.72px;font-size:12.15px;line-height:12.15px;color:#2480d6;">PCL-0000003</div>
<div class="t" style="left:418.6px;top:768.33px;font-size:12.6px;line-height:12.6px;color:#34486b;">Active</div>
<div class="t" style="right:1244.2px;top:768.33px;font-size:12.6px;line-height:12.6px;color:#34486b;">-</div>
<div class="t" style="right:1103.2px;top:768.33px;font-size:12.6px;line-height:12.6px;color:#34486b;">1.0000</div>
<div class="t" style="right:906.2px;top:768.33px;font-size:12.6px;line-height:12.6px;color:#34486b;">USD 10.00</div>
<div class="t" style="right:768.2px;top:768.33px;font-size:12.6px;line-height:12.6px;color:#34486b;">USD 0.00</div>
<div class="t" style="right:674.8px;top:768.33px;font-size:12.6px;line-height:12.6px;color:#34486b;letter-spacing:1px;">3/4/2020</div>
<div class="t" style="right:588.2px;top:768.33px;font-size:12.6px;line-height:12.6px;color:#34486b;">-</div>
<div class="t" style="left:32.5px;transform:translateX(-50%);top:798.33px;font-size:12.6px;line-height:12.6px;color:#6b6967;">6</div>
<div class="t" style="left:59.2px;top:797.72px;font-size:12.15px;line-height:12.15px;color:#2480d6;">PCL-0000005</div>
<div class="t" style="left:418.6px;top:798.33px;font-size:12.6px;line-height:12.6px;color:#34486b;">Expired</div>
<div class="t" style="right:1244.2px;top:798.33px;font-size:12.6px;line-height:12.6px;color:#34486b;">10.0000</div>
<div class="t" style="right:1103.2px;top:798.33px;font-size:12.6px;line-height:12.6px;color:#34486b;">8.0000</div>
<div class="t" style="right:906.2px;top:798.33px;font-size:12.6px;line-height:12.6px;color:#34486b;">-</div>
<div class="t" style="right:768.2px;top:798.33px;font-size:12.6px;line-height:12.6px;color:#34486b;">USD 0.00</div>
<div class="t" style="right:674.8px;top:798.33px;font-size:12.6px;line-height:12.6px;color:#34486b;letter-spacing:1px;">2/1/2020</div>
<div class="t" style="right:587.8px;top:798.33px;font-size:12.6px;line-height:12.6px;color:#34486b;letter-spacing:1px;">2/25/2020</div>
<div class="t" style="left:32.5px;transform:translateX(-50%);top:828.33px;font-size:12.6px;line-height:12.6px;color:#6b6967;">7</div>
<div class="t" style="left:59.2px;top:827.72px;font-size:12.15px;line-height:12.15px;color:#2480d6;">PCL-0000006</div>
<div class="t" style="left:418.6px;top:828.33px;font-size:12.6px;line-height:12.6px;color:#34486b;">Expired</div>
<div class="t" style="right:1244.2px;top:828.33px;font-size:12.6px;line-height:12.6px;color:#34486b;">10.0000</div>
<div class="t" style="right:1103.2px;top:828.33px;font-size:12.6px;line-height:12.6px;color:#34486b;">0.0000</div>
<div class="t" style="right:906.2px;top:828.33px;font-size:12.6px;line-height:12.6px;color:#34486b;">-</div>
<div class="t" style="right:768.2px;top:828.33px;font-size:12.6px;line-height:12.6px;color:#34486b;">USD 0.00</div>
<div class="t" style="right:674.8px;top:828.33px;font-size:12.6px;line-height:12.6px;color:#34486b;letter-spacing:1px;">2/1/2020</div>
<div class="t" style="right:587.8px;top:828.33px;font-size:12.6px;line-height:12.6px;color:#34486b;letter-spacing:1px;">2/25/2020</div>
<div class="t" style="left:32.5px;transform:translateX(-50%);top:858.33px;font-size:12.6px;line-height:12.6px;color:#6b6967;">8</div>
<div class="t" style="left:59.2px;top:857.72px;font-size:12.15px;line-height:12.15px;color:#2480d6;">PCL-0000007</div>
<div class="t" style="left:418.6px;top:858.33px;font-size:12.6px;line-height:12.6px;color:#34486b;">Active</div>
<div class="t" style="right:1244.2px;top:858.33px;font-size:12.6px;line-height:12.6px;color:#34486b;">10.0000</div>
<div class="t" style="right:1103.2px;top:858.33px;font-size:12.6px;line-height:12.6px;color:#34486b;">9.0000</div>
<div class="t" style="right:906.2px;top:858.33px;font-size:12.6px;line-height:12.6px;color:#34486b;">USD 100.00</div>
<div class="t" style="right:768.2px;top:858.33px;font-size:12.6px;line-height:12.6px;color:#34486b;">USD 35.00</div>
<div class="t" style="right:674.8px;top:858.33px;font-size:12.6px;line-height:12.6px;color:#34486b;letter-spacing:1px;">2/1/2020</div>
<div class="t" style="right:587.8px;top:858.33px;font-size:12.6px;line-height:12.6px;color:#34486b;letter-spacing:1px;">3/30/2020</div>
<div class="t" style="left:32.5px;transform:translateX(-50%);top:888.33px;font-size:12.6px;line-height:12.6px;color:#6b6967;">9</div>
<div class="t" style="left:59.2px;top:887.72px;font-size:12.15px;line-height:12.15px;color:#2480d6;">PCL-0000008</div>
<div class="t" style="left:418.6px;top:888.33px;font-size:12.6px;line-height:12.6px;color:#34486b;">Expired</div>
<div class="t" style="right:1244.2px;top:888.33px;font-size:12.6px;line-height:12.6px;color:#34486b;">10.0000</div>
<div class="t" style="right:1103.2px;top:888.33px;font-size:12.6px;line-height:12.6px;color:#34486b;">0.0000</div>
<div class="t" style="right:906.2px;top:888.33px;font-size:12.6px;line-height:12.6px;color:#34486b;">USD 100.00</div>
<div class="t" style="right:768.2px;top:888.33px;font-size:12.6px;line-height:12.6px;color:#34486b;">USD 0.00</div>
<div class="t" style="right:674.8px;top:888.33px;font-size:12.6px;line-height:12.6px;color:#34486b;letter-spacing:1px;">2/1/2020</div>
<div class="t" style="right:587.8px;top:888.33px;font-size:12.6px;line-height:12.6px;color:#34486b;letter-spacing:1px;">3/30/2020</div>
<div class="r" style="left:12px;top:911px;width:1896px;height:26px;background:#f8f8f8"></div>
<div class="t" style="left:19.4px;top:917.59px;font-size:12.3px;line-height:12.3px;color:#706e6b;">Row Counts</div>
<div class="r" style="left:94.6px;top:915px;width:41px;height:18px;background:#1b5297;border-radius:9px"></div>
<div class="r" style="left:119.6px;top:917.5px;width:13px;height:13px;background:#fff;border-radius:50%"></div>
<svg class="r" style="left:101.6px;top:919px" width="12" height="10" viewBox="0 0 12 10"><path d="M1 5 L4.4 8.4 L11 1.4" fill="none" stroke="#fff" stroke-width="1.9"/></svg>
<div class="t" style="left:151.5px;top:917.59px;font-size:12.3px;line-height:12.3px;color:#706e6b;">Detail Rows</div>
<div class="r" style="left:224.5px;top:915px;width:41px;height:18px;background:#1b5297;border-radius:9px"></div>
<div class="r" style="left:249.5px;top:917.5px;width:13px;height:13px;background:#fff;border-radius:50%"></div>
<svg class="r" style="left:231.5px;top:919px" width="12" height="10" viewBox="0 0 12 10"><path d="M1 5 L4.4 8.4 L11 1.4" fill="none" stroke="#fff" stroke-width="1.9"/></svg>
<div class="t" style="left:282.1px;top:917.59px;font-size:12.3px;line-height:12.3px;color:#706e6b;">Grand Total</div>
<div class="r" style="left:354.7px;top:915px;width:41px;height:18px;background:#aeaaa7;border-radius:9px"></div>
<div class="r" style="left:357.7px;top:917.5px;width:13px;height:13px;background:#fff;border-radius:50%"></div>
<div class="t" style="left:411.3px;top:917.59px;font-size:12.3px;line-height:12.3px;color:#706e6b;">Stacked Summaries</div>
<div class="r" style="left:529.4px;top:915px;width:41px;height:18px;background:#aeaaa7;border-radius:9px"></div>
<div class="r" style="left:532.4px;top:917.5px;width:13px;height:13px;background:#fff;border-radius:50%"></div>
<div class="r" style="left:12px;top:102px;width:1px;height:835px;background:rgba(176,196,223,0.45)"></div>
<div class="r" style="left:1908px;top:102px;width:1px;height:835px;background:rgba(255,255,255,0.4)"></div>
</body></html>
